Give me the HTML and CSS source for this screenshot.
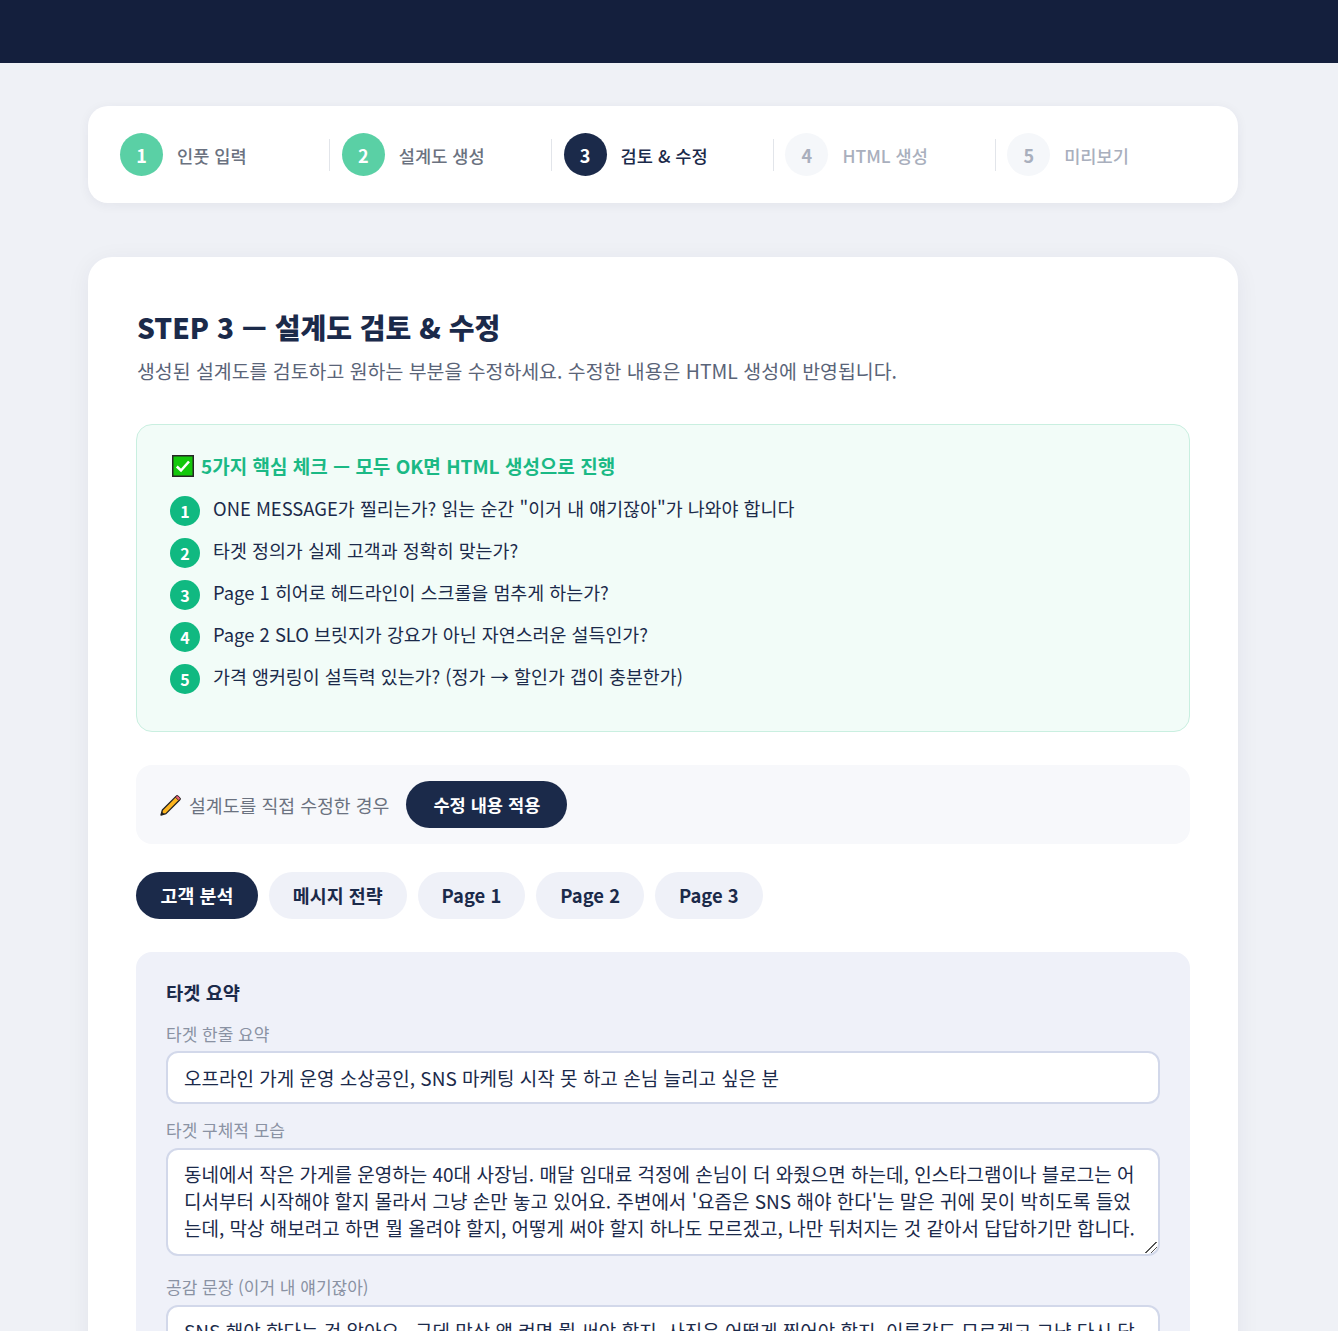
FILE: index.html
```html
<!DOCTYPE html>
<html lang="ko">
<head>
<meta charset="utf-8">
<title>STEP 3</title>
<link rel="stylesheet" href="styles.css">
</head>
<body>
<header class="topbar"></header>
<main class="wrap">
  <nav class="stepper">
    <div class="step done"><span class="num">1</span><span class="lbl">인풋 입력</span></div>
    <span class="sep"></span>
    <div class="step done"><span class="num">2</span><span class="lbl">설계도 생성</span></div>
    <span class="sep"></span>
    <div class="step active"><span class="num">3</span><span class="lbl">검토 &amp; 수정</span></div>
    <span class="sep"></span>
    <div class="step todo"><span class="num">4</span><span class="lbl">HTML 생성</span></div>
    <span class="sep"></span>
    <div class="step todo"><span class="num">5</span><span class="lbl">미리보기</span></div>
  </nav>
  <section class="card">
    <h1 class="title">STEP 3 — 설계도 검토 &amp; 수정</h1>
    <p class="sub">생성된 설계도를 검토하고 원하는 부분을 수정하세요. 수정한 내용은 HTML 생성에 반영됩니다.</p>
    <div class="check">
      <h2 class="check-h"><svg class="ico-check" viewBox="0 0 22 22"><rect x="0.75" y="0.75" width="20.5" height="20.5" fill="#14c80c" stroke="#262626" stroke-width="1.5"/><path d="M4.8 11.5l4.2 4 8-9" fill="none" stroke="#fff" stroke-width="2.6"/></svg>5가지 핵심 체크 — 모두 OK면 HTML 생성으로 진행</h2>
      <ol class="list">
        <li class="row"><span class="bul">1</span><span>ONE MESSAGE가 찔리는가? 읽는 순간 "이거 내 얘기잖아"가 나와야 합니다</span></li>
        <li class="row"><span class="bul">2</span><span>타겟 정의가 실제 고객과 정확히 맞는가?</span></li>
        <li class="row"><span class="bul">3</span><span>Page 1 히어로 헤드라인이 스크롤을 멈추게 하는가?</span></li>
        <li class="row"><span class="bul">4</span><span>Page 2 SLO 브릿지가 강요가 아닌 자연스러운 설득인가?</span></li>
        <li class="row"><span class="bul">5</span><span>가격 앵커링이 설득력 있는가? (정가 → 할인가 갭이 충분한가)</span></li>
      </ol>
    </div>
    <div class="apply">
      <span class="apply-t"><svg class="ico-pencil" viewBox="0 0 22 22"><path d="M1 21l1.4-5L16 2.4a1.5 1.5 0 0 1 2.1 0l1.5 1.5a1.5 1.5 0 0 1 0 2.1L6 19.6z" fill="#fcb41e" stroke="#222" stroke-width="1.3" stroke-linejoin="round"/><path d="M15.3 3.1l3.6 3.6.9-.9a1.5 1.5 0 0 0 0-2.1l-1.6-1.6a1.5 1.5 0 0 0-2.1 0z" fill="#ea5f78" stroke="#222" stroke-width=".8"/><path d="M1 21l.9-3.2 2.3 2.3z" fill="#222"/></svg>설계도를 직접 수정한 경우</span>
      <button class="btn" type="button">수정 내용 적용</button>
    </div>
    <div class="tabs">
      <button class="tab on" type="button">고객 분석</button>
      <button class="tab" type="button">메시지 전략</button>
      <button class="tab" type="button">Page 1</button>
      <button class="tab" type="button">Page 2</button>
      <button class="tab" type="button">Page 3</button>
    </div>
    <div class="panel">
      <h3 class="panel-h">타겟 요약</h3>
      <label class="fl">타겟 한줄 요약</label>
      <input class="inp" type="text" value="오프라인 가게 운영 소상공인, SNS 마케팅 시작 못 하고 손님 늘리고 싶은 분">
      <label class="fl">타겟 구체적 모습</label>
      <textarea class="ta" rows="3">동네에서 작은 가게를 운영하는 40대 사장님. 매달 임대료 걱정에 손님이 더 와줬으면 하는데, 인스타그램이나 블로그는 어디서부터 시작해야 할지 몰라서 그냥 손만 놓고 있어요. 주변에서 '요즘은 SNS 해야 한다'는 말은 귀에 못이 박히도록 들었는데, 막상 해보려고 하면 뭘 올려야 할지, 어떻게 써야 할지 하나도 모르겠고, 나만 뒤처지는 것 같아서 답답하기만 합니다.</textarea>
      <label class="fl">공감 문장 (이거 내 얘기잖아)</label>
      <textarea class="ta" rows="3">SNS 해야 한다는 건 알아요.  근데 막상 앱 켜면 뭘 써야 할지, 사진은 어떻게 찍어야 할지, 이름값도 모르겠고 그냥 다시 닫</textarea>
    </div>
  </section>
</main>
</body>
</html>
```
FILE: styles.css
```css
* { box-sizing: border-box; }
html, body { margin: 0; padding: 0; }
body {
  background: #eff1f6;
  color: #1b2a4a;
  font-family: "Noto Sans CJK KR", "Noto Sans", sans-serif;
  height: 1331px;
  overflow: hidden;
}
.topbar { height: 63px; background: #141f3d; }
.wrap { width: 1150px; margin: 43px 0 0 88px; }
.stepper {
  display: flex; align-items: center; gap: 11.5px;
  height: 97px; padding: 0 33px 0 32px;
  background: #fff; border-radius: 20px;
  box-shadow: 0 2px 12px rgba(27, 42, 74, .06);
}
.step { flex: 1 1 0; display: flex; align-items: center; gap: 14px; min-width: 0; }
.num {
  width: 43px; height: 43px; border-radius: 50%; flex: none;
  display: flex; align-items: center; justify-content: center;
  font-size: 18px; font-weight: 700; color: #fff;
}
.lbl { font-size: 17.6px; font-weight: 500; line-height: 27px; margin-top: 1px; }
.done .num { background: #5ad0a5; }
.done .lbl { color: #6b7280; }
.active .num { background: #1b2a4a; }
.active .lbl { color: #1b2a4a; }
.todo .num { background: #f5f7fa; color: #a9afbd; }
.todo .lbl { color: #a9afbd; }
.sep { flex: none; width: 1px; height: 32px; background: #e2e5ea; }
.card {
  margin-top: 54px; padding: 48px 48px 40px;
  background: #fff; border-radius: 24px;
  box-shadow: 0 4px 24px rgba(27, 42, 74, .06);
}
.title { margin: 0 0 0 1px; font-size: 28px; line-height: 44px; font-weight: 800; color: #1b2a4a; }
.sub { margin: 8px 0 0 1px; font-size: 19.42px; line-height: 28px; color: #5a6478; }
.check {
  margin-top: 39px; height: 308px; padding: 25px 33px;
  background: #f2fcf8; border: 1px solid #c9efe0; border-radius: 16px;
}
.check-h {
  display: flex; align-items: center; gap: 7px;
  margin: 0; font-size: 19px; line-height: 32px; font-weight: 700; color: #1bb985;
  padding-left: 2px;
}
.ico-check { width: 22px; height: 22px; flex: none; }
.list { list-style: none; margin: 13px 0 0; padding: 0; }
.row { display: flex; gap: 13px; height: 42px; align-items: flex-start; font-size: 18.4px; line-height: 27px; color: #1b2a4a; }
.bul {
  width: 30px; height: 30px; border-radius: 50%; flex: none; margin-top: 1px;
  display: flex; align-items: center; justify-content: center;
  background: #10b981; color: #fff; font-size: 16px; font-weight: 700;
}
.apply {
  margin-top: 33px; height: 79px; padding: 0 24px;
  display: flex; align-items: center; gap: 17px;
  background: #f7f8fb; border-radius: 16px;
}
.apply-t { display: flex; align-items: center; gap: 7px; font-size: 18.3px; color: #6b7280; }
.ico-pencil { width: 22px; height: 22px; flex: none; }
.btn {
  height: 47px; padding: 0 27px; border: 0; border-radius: 24px;
  background: #1b2a4a; color: #fff;
  font: 700 17.6px "Noto Sans CJK KR", sans-serif;
}
.tabs { display: flex; gap: 11px; margin-top: 28px; }
.tab {
  height: 47px; padding: 0 24px 1px; border: 0; border-radius: 24px;
  background: #eff1f8; color: #1b2a4a;
  font: 700 18.4px "Noto Sans CJK KR", sans-serif;
}
.tab.on { padding: 0 24.5px 1px; background: #1b2a4a; color: #fff; }
.panel {
  margin-top: 33px; padding: 24px 30px;
  background: #eff1f9; border-radius: 16px;
}
.panel-h { margin: 0; font-size: 18.72px; line-height: 32px; font-weight: 700; color: #1b2a4a; }
.fl { display: block; margin-top: 13px; font-size: 17px; line-height: 25px; color: #8a92a3; }
.inp, .ta {
  display: block; width: 100%; margin: 5px 0 12px; padding: 0 16px;
  background: #fff; border: 2px solid #d2d8ea; border-radius: 12px;
  color: #1b2a4a; font: 400 19px/27px "Noto Sans CJK KR", sans-serif; outline: 0;
}
.inp { height: 53px; }
.ta { height: 108px; margin-top: 6px; margin-bottom: 18px; padding-top: 10px; padding-bottom: 12px; resize: vertical; overflow: hidden; }
.ta::-webkit-resizer {
  background: linear-gradient(135deg, transparent 0 47%, #555 47% 55%, transparent 55% 70%, #555 70% 78%, transparent 78%) no-repeat 2px 3px / 12px 11px;
}
```
